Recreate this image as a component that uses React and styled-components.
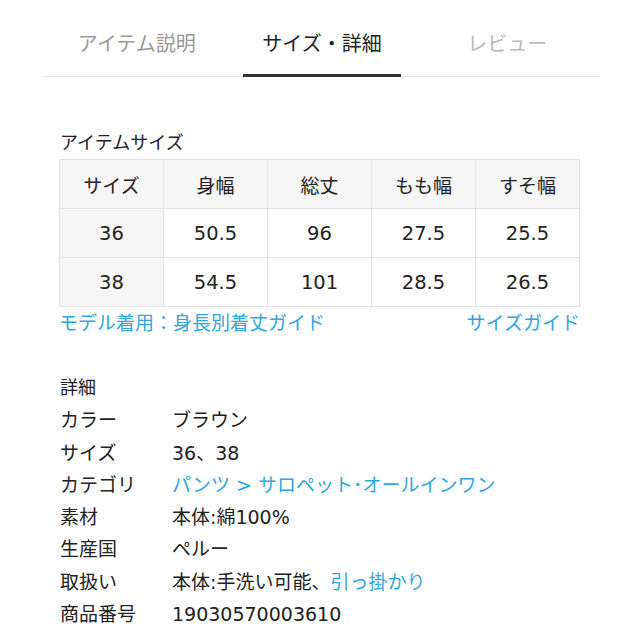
import React from 'react';
import styled, { createGlobalStyle } from 'styled-components';

const GlobalStyle = createGlobalStyle`
  body {
    margin: 0;
    background: #fff;
    font-family: "DejaVu Sans", "Noto Sans CJK JP", sans-serif;
    color: #222;
  }
`;

const Page = styled.div`
  width: 556px;
  margin-left: 44px;
  padding-top: 12px;
`;

const TabBar = styled.div`
  display: grid;
  grid-template-columns: repeat(3, 1fr);
  border-bottom: 1px solid #e6e6e6;
`;

const Tab = styled.div`
  position: relative;
  height: 64px;
  line-height: 64px;
  text-align: center;
  font-size: 20px;
  color: ${(p) => (p.$active ? '#222' : p.$faint ? '#bbb' : '#999')};

  &::after {
    content: '';
    display: ${(p) => (p.$active ? 'block' : 'none')};
    position: absolute;
    left: 14px;
    right: 14px;
    bottom: -1px;
    height: 3px;
    background: #333;
  }
`;

const Content = styled.div`
  padding: 54px 20px 0 15px;
`;

const SectionTitle = styled.div`
  font-size: 18px;
  line-height: 24px;
  padding-left: 1px;
  margin-bottom: 4px;
`;

const SizeTable = styled.table`
  width: 100%;
  border-collapse: collapse;
  table-layout: fixed;
  border: 1px solid #e4e4e4;
`;

const Th = styled.th`
  height: 48px;
  font-weight: normal;
  font-size: 19px;
  background: #f6f6f6;
  border: 1px solid #e4e4e4;
  text-align: center;
  padding: 0;
`;

const Td = styled.td`
  height: 48px;
  font-size: 19.5px;
  text-align: center;
  padding: 0;
  border: 1px solid #e4e4e4;
  background: ${(p) => (p.$head ? '#f6f6f6' : '#fff')};
`;

const Links = styled.div`
  display: flex;
  justify-content: space-between;
  margin-top: 4px;
  font-size: 19px;
  line-height: 24px;
`;

const Link = styled.span`
  color: #2ea7e0;
`;

const DetailTitle = styled.div`
  margin-top: 37px;
  font-size: 18px;
  line-height: 32.3px;
  padding-left: 1px;
`;

const DetailList = styled.div`
  display: flex;
  flex-direction: column;
`;

const DetailRow = styled.div`
  display: grid;
  grid-template-columns: 112px 1fr;
  font-size: 19px;
  line-height: 32.3px;
  padding-left: 1px;
`;

const Label = styled.div``;

const Value = styled.div`
  white-space: nowrap;
`;

const sizes = [
  ['36', '50.5', '96', '27.5', '25.5'],
  ['38', '54.5', '101', '28.5', '26.5'],
];

const details = [
  { label: 'カラー', value: 'ブラウン' },
  { label: 'サイズ', value: '36、38' },
  { label: 'カテゴリ', value: <Link>パンツ &gt; サロペット･オールインワン</Link> },
  { label: '素材', value: '本体:綿100%' },
  { label: '生産国', value: 'ペルー' },
  {
    label: '取扱い',
    value: (
      <>
        本体:手洗い可能、<Link>引っ掛かり</Link>
      </>
    ),
  },
  { label: '商品番号', value: '19030570003610' },
];

const App = () => {
  return (
    <>
      <GlobalStyle />
      <Page>
        <TabBar>
          <Tab>アイテム説明</Tab>
          <Tab $active>サイズ・詳細</Tab>
          <Tab $faint>レビュー</Tab>
        </TabBar>
        <Content>
          <SectionTitle>アイテムサイズ</SectionTitle>
          <SizeTable>
            <thead>
              <tr>
                {['サイズ', '身幅', '総丈', 'もも幅', 'すそ幅'].map((h) => (
                  <Th key={h}>{h}</Th>
                ))}
              </tr>
            </thead>
            <tbody>
              {sizes.map((row) => (
                <tr key={row[0]}>
                  {row.map((v, i) => (
                    <Td key={i} $head={i === 0}>
                      {v}
                    </Td>
                  ))}
                </tr>
              ))}
            </tbody>
          </SizeTable>
          <Links>
            <Link>モデル着用：身長別着丈ガイド</Link>
            <Link>サイズガイド</Link>
          </Links>
          <DetailTitle>詳細</DetailTitle>
          <DetailList>
            {details.map((d) => (
              <DetailRow key={d.label}>
                <Label>{d.label}</Label>
                <Value>{d.value}</Value>
              </DetailRow>
            ))}
          </DetailList>
        </Content>
      </Page>
    </>
  );
};

export default App;
